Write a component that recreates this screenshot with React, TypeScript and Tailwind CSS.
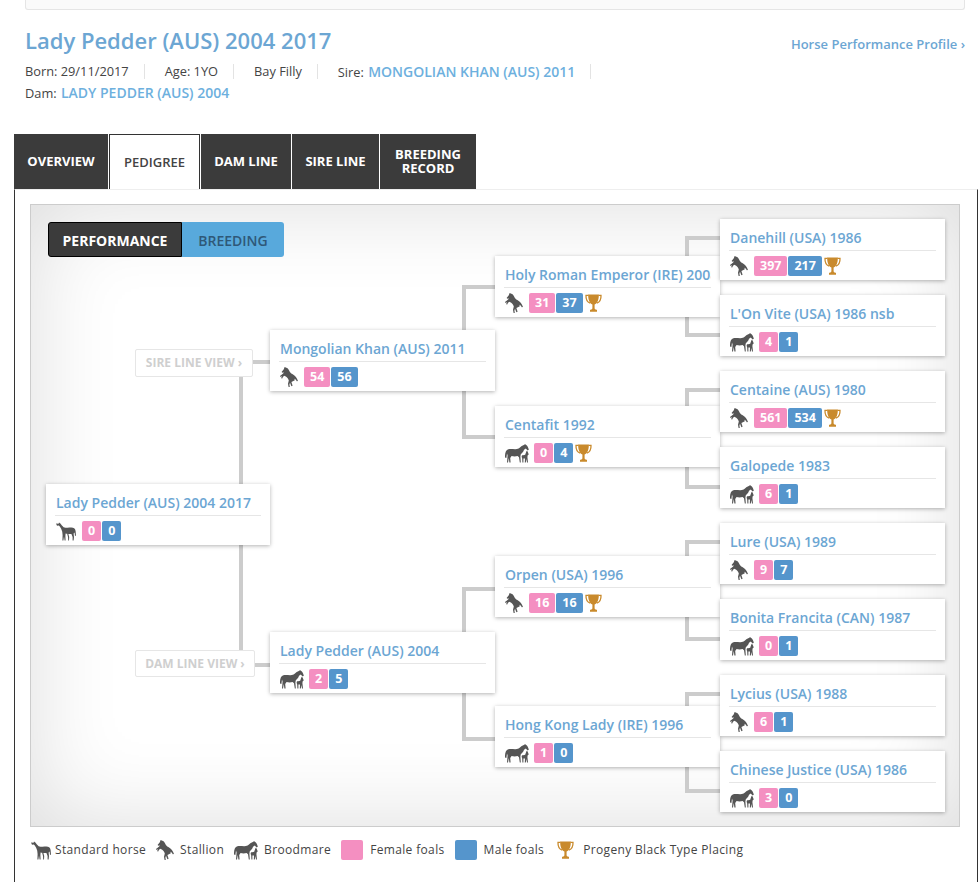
import type { ReactNode } from "react";

type Kind = "standard" | "stallion" | "mare";

type HorseNode = {
  name: string;
  kind: Kind;
  female: number;
  male: number;
  trophy?: boolean;
  pos: string;
};

const nodes: HorseNode[] = [
  { name: "Lady Pedder (AUS) 2004 2017", kind: "standard", female: 0, male: 0, pos: "left-[15px] top-[279px] w-[224px]" },
  { name: "Mongolian Khan (AUS) 2011", kind: "stallion", female: 54, male: 56, pos: "left-[239px] top-[125px] w-[225px]" },
  { name: "Lady Pedder (AUS) 2004", kind: "mare", female: 2, male: 5, pos: "left-[239px] top-[427px] w-[225px]" },
  { name: "Holy Roman Emperor (IRE) 2008", kind: "stallion", female: 31, male: 37, trophy: true, pos: "left-[464px] top-[51px] w-[225px]" },
  { name: "Centafit 1992", kind: "mare", female: 0, male: 4, trophy: true, pos: "left-[464px] top-[201px] w-[225px]" },
  { name: "Orpen (USA) 1996", kind: "stallion", female: 16, male: 16, trophy: true, pos: "left-[464px] top-[351px] w-[225px]" },
  { name: "Hong Kong Lady (IRE) 1996", kind: "mare", female: 1, male: 0, pos: "left-[464px] top-[501px] w-[225px]" },
  { name: "Danehill (USA) 1986", kind: "stallion", female: 397, male: 217, trophy: true, pos: "left-[689px] top-[14px] w-[225px]" },
  { name: "L'On Vite (USA) 1986 nsb", kind: "mare", female: 4, male: 1, pos: "left-[689px] top-[90px] w-[225px]" },
  { name: "Centaine (AUS) 1980", kind: "stallion", female: 561, male: 534, trophy: true, pos: "left-[689px] top-[166px] w-[225px]" },
  { name: "Galopede 1983", kind: "mare", female: 6, male: 1, pos: "left-[689px] top-[242px] w-[225px]" },
  { name: "Lure (USA) 1989", kind: "stallion", female: 9, male: 7, pos: "left-[689px] top-[318px] w-[225px]" },
  { name: "Bonita Francita (CAN) 1987", kind: "mare", female: 0, male: 1, pos: "left-[689px] top-[394px] w-[225px]" },
  { name: "Lycius (USA) 1988", kind: "stallion", female: 6, male: 1, pos: "left-[689px] top-[470px] w-[225px]" },
  { name: "Chinese Justice (USA) 1986", kind: "mare", female: 3, male: 0, pos: "left-[689px] top-[546px] w-[225px]" },
];

const brackets = [
  "left-[654px] top-[31px] h-[101px] w-[35px]",
  "left-[654px] top-[183px] h-[101px] w-[35px]",
  "left-[654px] top-[335px] h-[101px] w-[35px]",
  "left-[654px] top-[487px] h-[101px] w-[35px]",
  "left-[431px] top-[80px] h-[154px] w-[33px]",
  "left-[431px] top-[382px] h-[154px] w-[33px]",
];

function StandardIcon() {
  return (
    <svg width="20" height="20" viewBox="0 0 20 20" className="shrink-0 fill-[#555]">
      <path d="M0 2.6 L2.6 2.8 L3 1.4 L4.4 2.6 C5.4 3.8 6.4 5.4 7.6 6.2 C10 7 13 6.6 15.4 6.6 C17.6 6.6 19.2 7.6 19.6 10 L20 14.6 L19 15 L18.6 11.4 L17.6 12.6 L18 16 L17.6 19.6 L16.6 19.6 L16.6 16 L15.4 13 C13.4 13.2 11.4 13 9.6 12.4 L9.4 15 L9.6 19.6 L8.6 19.6 L8 15.4 L7.4 19.6 L6.4 19.6 L6.6 14 L6.2 10.4 C5.6 8.6 4.8 7 3.8 5.6 L2.8 4.6 L1 4.8 Z" />
      <path d="M12.4 13 L13.2 16 L13 19.6 L12.2 19.6 L12 16 L11.2 13 Z" />
    </svg>
  );
}

function StallionIcon() {
  return (
    <svg width="18" height="20" viewBox="0 0 18 20" className="shrink-0 fill-[#555]">
      <path d="M4.6 0 L6.4 0.8 C8.2 1.4 8.8 3 9.6 4.6 C10.4 6.2 12 7 13.4 7.8 C15.2 8.8 16.8 10.8 18 14 L16.8 14.2 C16 12.8 15.2 12 14.4 11.8 L14.8 13.2 L12.4 14.4 L11.4 15 L12.6 18.8 L11.4 19.2 L10 15.8 L9.4 17.6 L9.8 20 L8.6 20 L8 16.8 L8.8 13.4 C8.2 11.8 7.4 10.6 6.2 9.8 L4.4 8.8 L3 9.8 L2.2 11.6 L1.2 11.2 L1.8 9 L0.4 10 L0 9 L3.2 6.4 L3.8 5.2 L2.4 5.8 L1.6 5 L3.8 2.2 Z" />
    </svg>
  );
}

function MareIcon() {
  return (
    <svg width="24" height="19" viewBox="0 0 24 19" className="shrink-0 fill-[#555]">
      <path d="M0 13.6 C-0.2 9 0.8 5.8 3.4 5.2 C7 4.6 10.6 6 13.6 4.6 C15.6 3.2 17 1.4 19.4 0.8 L20 0 L20.8 0.8 C22.4 1.6 23.4 3.6 23.8 5.8 L22.6 6.4 L20.8 4.4 L19 5.8 C18.4 7.8 17.2 9.2 15.8 10.2 L15.4 12.6 L15.8 18.6 L14.8 18.6 L14 13.2 L12.6 12 C10.6 12.6 8.4 12.6 6.6 12 L5.2 14 L5.6 18.6 L4.4 18.6 L3.8 14 L3 18.6 L2 18.6 L2.6 11.4 L2 9.6 L1.4 14 Z" />
      <path d="M17 11.2 C18.4 11.4 19.4 11.2 20.2 10.8 L21.2 7.8 L21.8 6.8 L22.6 7.6 L23.8 10.6 L22.8 11 L22.4 13 L23 18.6 L22 18.6 L21.4 15 L20.8 18.6 L19.8 18.6 L20 14.6 L18.4 14.6 L18.4 18.6 L17.4 18.6 L17.2 14.4 L16.6 12.8 Z" />
    </svg>
  );
}

function HorseIcon({ kind }: { kind: Kind }) {
  if (kind === "stallion") return <StallionIcon />;
  if (kind === "mare") return <MareIcon />;
  return <StandardIcon />;
}

function Trophy() {
  return (
    <svg width="17" height="18" viewBox="0 0 17 18" className="shrink-0">
      <path d="M3.6 1.4 H1 C0.8 5.6 2.4 8.2 5.2 9.2" fill="none" stroke="#c98a2c" strokeWidth="1.3" />
      <path d="M13.4 1.4 H16 C16.2 5.6 14.6 8.2 11.8 9.2" fill="none" stroke="#c98a2c" strokeWidth="1.3" />
      <path
        d="M3.2 0.4 H13.8 C14 5.4 12.4 9.4 9.6 10.6 V14.4 C10 15.2 11 15.6 12 15.8 V17.8 H5 V15.8 C6 15.6 7 15.2 7.4 14.4 V10.6 C4.6 9.4 3 5.4 3.2 0.4 Z"
        fill="#c98a2c"
      />
    </svg>
  );
}

function Badge({ value, male }: { value: number; male?: boolean }) {
  return (
    <span
      className={
        "flex h-5 items-center rounded-[2px] px-[6px] text-[12.5px] font-bold text-white " +
        (male ? "bg-[#5595cc]" : "bg-[#f48fc1]")
      }
    >
      {value}
    </span>
  );
}

function Node({ node }: { node: HorseNode }) {
  return (
    <div className={"absolute h-[61px] bg-white px-[9px] shadow-[0_1px_4px_rgba(0,0,0,0.3)] " + node.pos}>
      <div className="h-[32px] overflow-hidden whitespace-nowrap border-b border-[#e6e6e6] pl-[1px] text-[14px] font-semibold leading-[38px] text-[#6ca6d3]">
        {node.name}
      </div>
      <div className="mt-[5px] flex items-center pl-[1px]">
        <HorseIcon kind={node.kind} />
        <div className={node.kind === "mare" ? "ml-[5px] flex gap-[1px]" : "ml-[6px] flex gap-[1px]"}>
          <Badge value={node.female} />
          <Badge value={node.male} male />
        </div>
        {node.trophy && (
          <span className="ml-[2px]">
            <Trophy />
          </span>
        )}
      </div>
    </div>
  );
}

function ViewButton({ label, pos }: { label: string; pos: string }) {
  return (
    <div
      className={
        "absolute flex items-center justify-center rounded-[2px] border border-[#e6e6e6] bg-white text-[12px] font-bold uppercase text-[#cfcfcf] " +
        pos
      }
    >
      {label}
    </div>
  );
}

function Tab({ children, className, active }: { children: ReactNode; className: string; active?: boolean }) {
  return (
    <div
      className={
        "flex h-[55px] items-center justify-center text-center text-[13px] uppercase leading-[14px] " +
        (active
          ? "border border-b-0 border-[#333] bg-white font-semibold text-[#444] "
          : "bg-[#3b3b3b] pb-[2px] font-bold text-white ") +
        className
      }
    >
      {children}
    </div>
  );
}

function InfoItem({ label, value, link }: { label?: string; value: string; link?: boolean }) {
  return (
    <div className="mb-[6px] mr-[20px] h-[15px] border-r border-[#e3e3e3] pr-[15px] leading-[15px] last:border-r-0">
      {label && <span className="font-medium">{label} </span>}
      <span className={link ? "ml-[1px] text-[14px] font-semibold leading-[15px] text-[#6db0de]" : ""}>{value}</span>
    </div>
  );
}

function LegendText({ children, className }: { children: ReactNode; className: string }) {
  return <span className={"text-[12px] tracking-[0.35px] text-[#444] " + className}>{children}</span>;
}

export default function App() {
  return (
    <div className="h-[882px] w-[978px] overflow-hidden bg-white font-['Open_Sans',sans-serif] text-[12.8px] text-[#444]">
      <div className="ml-[25px] h-[10px] w-[940px] rounded-b-[3px] border border-t-0 border-[#e5e5e5] bg-[#fafafa]" />

      <div className="flex justify-between pl-[25px] pr-[13px]">
        <div>
          <h1 className="mt-[14px] text-[22px] font-semibold leading-[32px] text-[#6ca6d3]">
            Lady Pedder (AUS) 2004 2017
          </h1>
          <div className="mt-[8px] flex w-[640px] flex-wrap">
            <InfoItem label="Born:" value="29/11/2017" />
            <InfoItem label="Age:" value="1YO" />
            <InfoItem value="Bay Filly" />
            <InfoItem label="Sire:" value="MONGOLIAN KHAN (AUS) 2011" link />
            <InfoItem label="Dam:" value="LADY PEDDER (AUS) 2004" link />
          </div>
        </div>
        <a className="mt-[25px] text-[13px] font-semibold text-[#6ca6d3]">Horse Performance Profile ›</a>
      </div>

      <div className="ml-[14px] mt-[28px] flex gap-[1px]">
        <Tab className="w-[94px]">Overview</Tab>
        <Tab className="w-[91px]" active>
          Pedigree
        </Tab>
        <Tab className="w-[90px]">Dam Line</Tab>
        <Tab className="w-[87px]">Sire Line</Tab>
        <Tab className="w-[96px]">
          Breeding
          <br />
          Record
        </Tab>
      </div>

      <div className="ml-[14px] h-[700px] w-[964px] border-x border-x-[#333] border-t border-t-[#eeeeee] px-[15px] pt-[14px]">
        <div className="relative h-[623px] w-[930px] border border-[#cccccc] bg-white pl-[17px] pt-[17px] shadow-[inset_0_0_90px_rgba(0,0,0,0.14)]">
          <div className="flex h-[35px] w-[236px] text-[14px] font-bold uppercase">
            <div className="flex w-[134px] items-center justify-center rounded-l-[3px] border border-black bg-[#3b3b3b] pt-[1px] text-white">
              Performance
            </div>
            <div className="flex w-[102px] items-center justify-center rounded-r-[3px] bg-[#58a9dc] pt-[1px] font-semibold text-[#2f5878]">
              Breeding
            </div>
          </div>

          {brackets.map((pos) => (
            <div key={pos} className={"absolute border-y-4 border-l-4 border-[#cccccc] " + pos} />
          ))}
          <div className="absolute left-[208px] top-[172px] h-[273px] w-[4px] bg-[#cccccc]" />
          <div className="absolute left-[222px] top-[155px] h-[4px] w-[17px] bg-[#cccccc]" />
          <div className="absolute left-[224px] top-[458px] h-[4px] w-[15px] bg-[#cccccc]" />
          <ViewButton label="Sire Line View ›" pos="left-[104px] top-[144px] h-[28px] w-[118px]" />
          <ViewButton label="Dam Line View ›" pos="left-[104px] top-[445px] h-[27px] w-[120px]" />

          {nodes.map((node) => (
            <Node key={node.name} node={node} />
          ))}
        </div>

        <div className="mt-[13px] flex h-[20px] items-center pl-[1px]">
          <StandardIcon />
          <LegendText className="ml-[4px]">Standard horse</LegendText>
          <span className="ml-[10px]">
            <StallionIcon />
          </span>
          <LegendText className="ml-[6px]">Stallion</LegendText>
          <span className="ml-[10px]">
            <MareIcon />
          </span>
          <LegendText className="ml-[6px]">Broodmare</LegendText>
          <span className="ml-[10px] h-5 w-[22px] rounded-[2px] bg-[#f48fc1]" />
          <LegendText className="ml-[7px]">Female foals</LegendText>
          <span className="ml-[10px] h-5 w-[22px] rounded-[2px] bg-[#5595cc]" />
          <LegendText className="ml-[7px]">Male foals</LegendText>
          <span className="ml-[13px]">
            <Trophy />
          </span>
          <LegendText className="ml-[9px]">Progeny Black Type Placing</LegendText>
        </div>
      </div>
    </div>
  );
}
